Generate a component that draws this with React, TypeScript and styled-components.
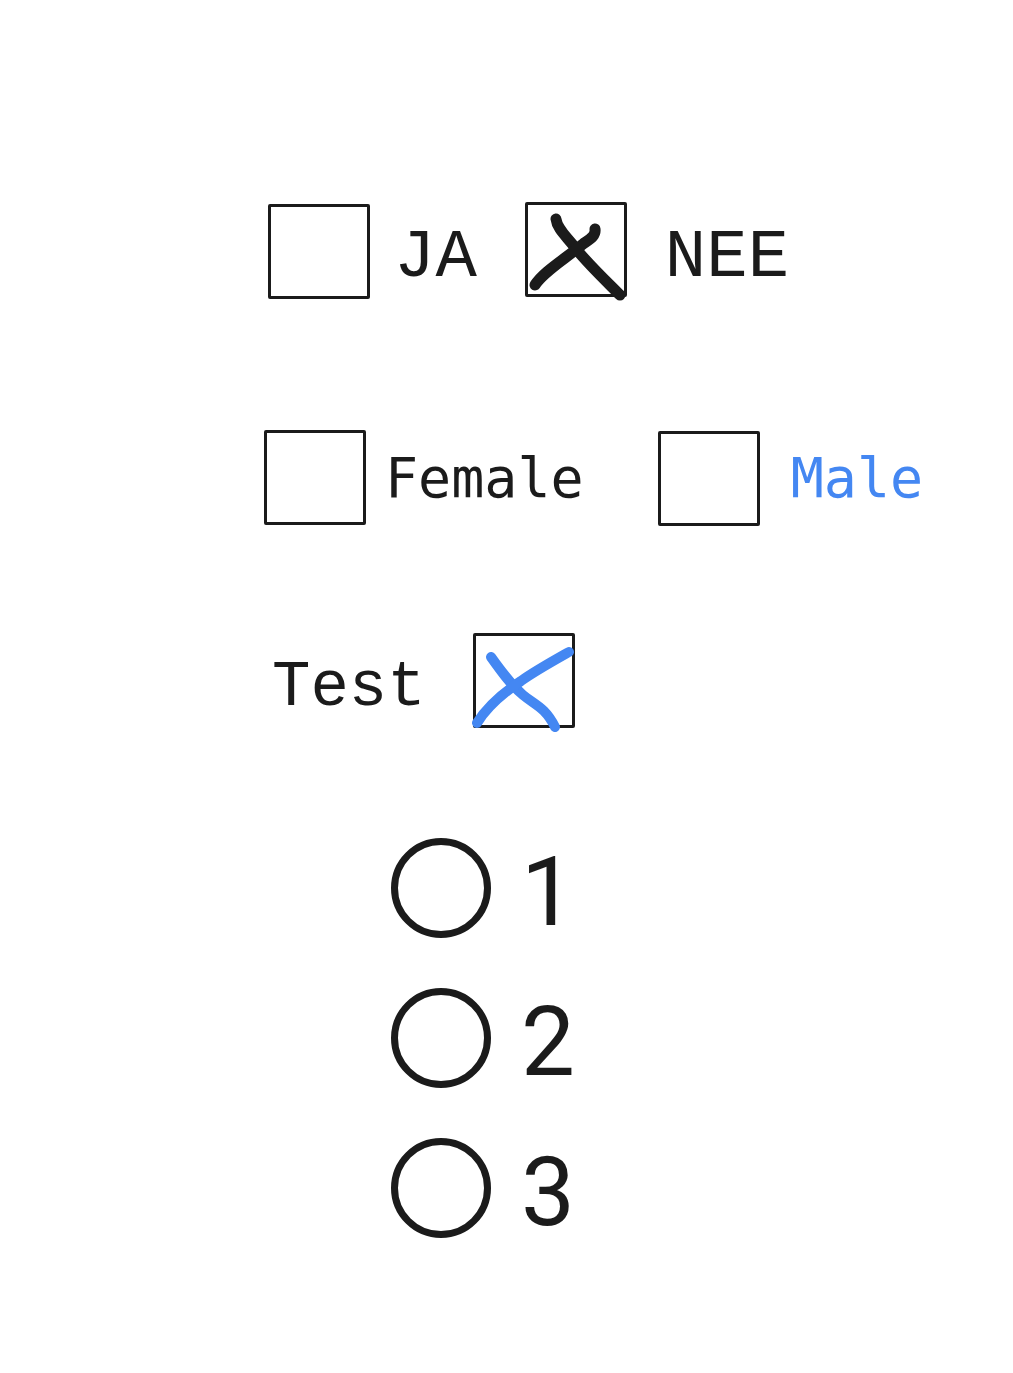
import React, {FunctionComponent} from 'react';
import styled, {createGlobalStyle} from 'styled-components';

const ink = '#1b1b1b';
const blue = '#4487f2';

const GlobalStyle = createGlobalStyle`
  html, body {
    margin: 0;
    padding: 0;
    background: #ffffff;
  }
`

const StyledPage = styled.main`
  width: 1013px;
  min-height: 1373px;
  padding-top: 200px;
  box-sizing: border-box;
  display: flex;
  flex-direction: column;
  color: ${ink};
`

const StyledRow = styled.div<{$left: number; $top: number}>`
  display: flex;
  align-items: center;
  height: 100px;
  margin-left: ${p => p.$left}px;
  margin-top: ${p => p.$top}px;
`

const StyledBox = styled.div<{$shift?: number; $gap: number}>`
  position: relative;
  flex: none;
  width: 102px;
  height: 95px;
  box-sizing: border-box;
  border: 3px solid ${ink};
  border-radius: 2px;
  margin-top: ${p => (p.$shift || 0) * 2}px;
  margin-right: ${p => p.$gap}px;
`

const StyledMark = styled.svg`
  position: absolute;
  left: -3px;
  top: -3px;
  width: 102px;
  height: 95px;
  overflow: visible;
`

const StyledLabel = styled.span<{$gap?: number}>`
  font-family: "Liberation Mono", "DejaVu Sans Mono", monospace;
  font-size: 69px;
  line-height: 1;
  padding-top: 16px;
  margin-right: ${p => p.$gap || 0}px;
`

const StyledMono = styled.span<{$color?: string; $gap?: number}>`
  font-family: "DejaVu Sans Mono", "Liberation Mono", monospace;
  font-size: 55px;
  line-height: 1;
  color: ${p => p.$color || ink};
  margin-right: ${p => p.$gap || 0}px;
`

const StyledTest = styled.span`
  font-family: "Liberation Mono", "DejaVu Sans Mono", monospace;
  font-size: 64px;
  line-height: 1;
  padding-top: 16px;
  margin-right: 47px;
`

const StyledRadios = styled.div`
  display: flex;
  flex-direction: column;
  gap: 50px;
  margin-left: 391px;
  margin-top: 108px;
`

const StyledRadio = styled.label`
  display: flex;
  align-items: center;
  height: 100px;
  gap: 30px;
  font-family: Roboto, Inter, "Liberation Sans", sans-serif;
  font-size: 96px;
  line-height: 1;
`

const StyledNumber = styled.span`
  padding-top: 8px;
`

const StyledCircle = styled.span`
  flex: none;
  width: 100px;
  height: 100px;
  box-sizing: border-box;
  border: 7px solid ${ink};
  border-radius: 50%;
`

interface CheckProps {
    mark?: 'black' | 'blue';
    gap: number;
    shift?: number;
}

const Check: FunctionComponent<CheckProps> = ({mark, gap, shift}) => (
    <StyledBox $gap={gap} $shift={shift}>
        {mark === 'black' && (
            <StyledMark viewBox="0 0 102 95">
                <path d="M31 17 C 32 26, 40 33, 48 43 C 60 59, 78 76, 95 93"
                      fill="none" stroke={ink} strokeWidth="11" strokeLinecap="round"/>
                <path d="M70 27 C 71 34, 65 37, 58 42 C 40 57, 18 70, 10 83"
                      fill="none" stroke={ink} strokeWidth="11" strokeLinecap="round"/>
            </StyledMark>
        )}
        {mark === 'blue' && (
            <StyledMark viewBox="0 0 102 95">
                <path d="M18 24 C 28 38, 38 52, 50 62 C 62 72, 72 74, 82 94"
                      fill="none" stroke={blue} strokeWidth="10" strokeLinecap="round"/>
                <path d="M96 19 C 80 28, 62 38, 48 48 C 30 60, 14 74, 4 90"
                      fill="none" stroke={blue} strokeWidth="10" strokeLinecap="round"/>
            </StyledMark>
        )}
    </StyledBox>
)

const App: FunctionComponent = (): JSX.Element => {
    return (
        <StyledPage>
            <GlobalStyle/>
            <StyledRow $left={268} $top={0}>
                <Check gap={24} shift={1}/>
                <StyledLabel $gap={48}>JA</StyledLabel>
                <Check mark="black" gap={38} shift={-1}/>
                <StyledLabel>NEE</StyledLabel>
            </StyledRow>
            <StyledRow $left={264} $top={128}>
                <Check gap={19} shift={-1}/>
                <StyledMono $gap={74}>Female</StyledMono>
                <Check gap={31}/>
                <StyledMono $color={blue}>Male</StyledMono>
            </StyledRow>
            <StyledRow $left={272} $top={102}>
                <StyledTest>Test</StyledTest>
                <Check mark="blue" gap={0}/>
            </StyledRow>
            <StyledRadios>
                {['1', '2', '3'].map(n => (
                    <StyledRadio key={n}>
                        <StyledCircle/>
                        <StyledNumber>{n}</StyledNumber>
                    </StyledRadio>
                ))}
            </StyledRadios>
        </StyledPage>
    )
}

export default App;
